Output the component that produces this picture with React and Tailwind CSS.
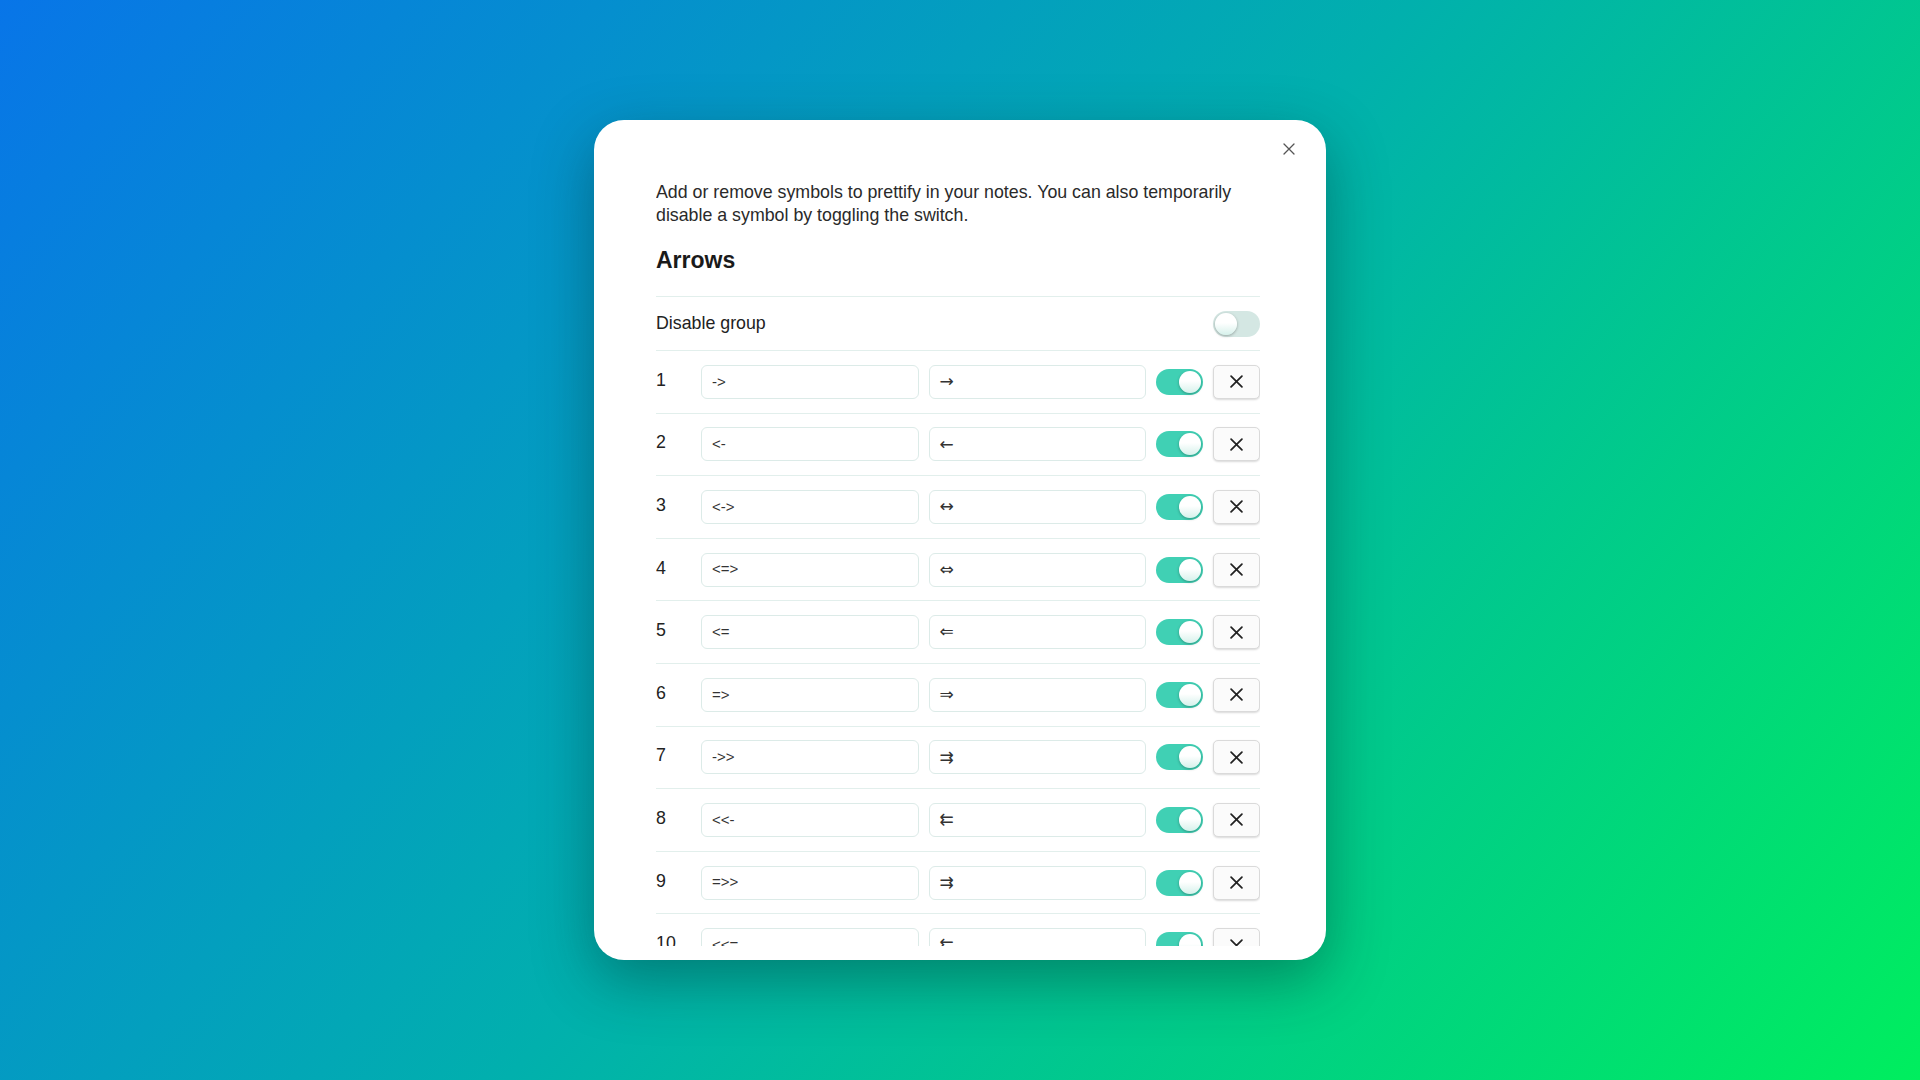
import React from "react"

const ROWS = [
  ["->", "→"],
  ["<-", "←"],
  ["<->", "↔"],
  ["<=>", "⇔"],
  ["<=", "⇐"],
  ["=>", "⇒"],
  ["->>", "⇉"],
  ["<<-", "⇇"],
  ["=>>", "⇉"],
  ["<<=", "⇇"],
]

function Toggle({ on }) {
  return (
    <div
      className={`flex items-center w-[47px] h-[26px] p-[2px] rounded-full shrink-0 ${
        on ? "justify-end bg-[#40d0b4]" : "justify-start bg-[#d4e7e3]"
      }`}
    >
      <div className="w-[22px] h-[22px] rounded-full bg-[linear-gradient(180deg,#ffffff_45%,#d6f1eb)] shadow-[0_1px_3px_rgba(0,0,0,0.3)]" />
    </div>
  )
}

function XIcon({ size = 12, className = "", width = 1.5 }) {
  return (
    <svg width={size} height={size} viewBox="0 0 12 12" fill="none" className={className}>
      <path d="M1 1L11 11M11 1L1 11" stroke="currentColor" strokeWidth={width} strokeLinecap="round" />
    </svg>
  )
}

function Field({ children, arrow }) {
  return (
    <div
      className={`flex-1 h-[34px] flex items-center px-[10px] rounded-[6px] border border-[#dcebe8] bg-white text-[#333] ${
        arrow ? "text-[17px]" : "text-[15px]"
      }`}
      style={arrow ? { fontFamily: '"DejaVu Sans", sans-serif' } : undefined}
    >
      {children}
    </div>
  )
}

function SymbolRow({ index, from, to }) {
  return (
    <div className="flex items-center gap-[10px] py-[13.8px] border-t border-[#e2efec]">
      <div className="w-[35px] text-[17.8px] text-[#222] leading-none -mt-[2px]">{index}</div>
      <Field>{from}</Field>
      <Field arrow>{to}</Field>
      <Toggle on />
      <button className="w-[47px] h-[34px] shrink-0 flex items-center justify-center rounded-[5px] border border-[#dadada] bg-[#fbfbfb] text-[#222] shadow-[0_1px_2px_rgba(0,0,0,0.15)]">
        <XIcon size={13} width={1.6} />
      </button>
    </div>
  )
}

export default function App() {
  return (
    <div
      className="min-h-screen w-full flex items-center justify-center bg-[linear-gradient(130deg,#0875e8_0%,#01b0ad_50%,#00ee5e_100%)]"
      style={{ fontFamily: '"Liberation Sans", "DejaVu Sans", Arial, sans-serif' }}
    >
      <div className="relative w-[732px] h-[840px] flex flex-col bg-white rounded-[30px] pt-[61px] pb-[14px] pl-[62px] pr-[66px] shadow-[0_20px_60px_rgba(0,40,40,0.4)]">
        <button className="absolute top-[23px] right-[31px] text-[#555]">
          <XIcon size={12} width={1.3} />
        </button>

        <div className="flex-1 overflow-hidden">
          <p className="text-[17.8px] leading-[23px] text-[#2a2a2a]">
            Add or remove symbols to prettify in your notes. You can also temporarily disable a symbol by toggling the
            switch.
          </p>
          <h2 className="mt-[19px] text-[23px] leading-[28px] font-bold text-[#1a1a1a]">Arrows</h2>

          <div className="mt-[22px] flex items-center justify-between h-[54px] border-t border-[#e2efec]">
            <span className="text-[17.8px] text-[#222]">Disable group</span>
            <Toggle on={false} />
          </div>

          {ROWS.map(([from, to], i) => (
            <SymbolRow key={i} index={i + 1} from={from} to={to} />
          ))}
        </div>
      </div>
    </div>
  )
}
